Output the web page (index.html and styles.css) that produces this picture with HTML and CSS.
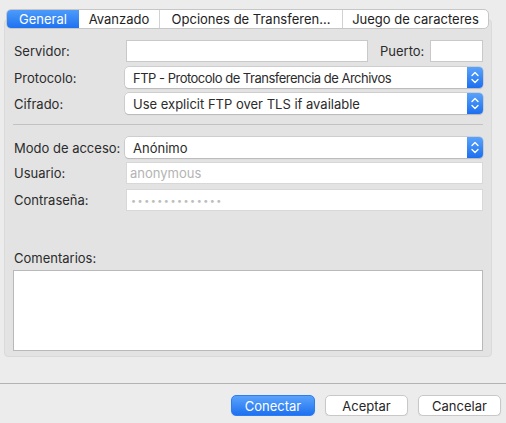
FILE: index.html
```html
<!DOCTYPE html>
<html lang="es">
<head>
  <meta charset="UTF-8" />
  <title>Gestor de sitios</title>
  <link rel="stylesheet" href="styles.css">
</head>
<body>

  <div class="tabs">
    <div class="tab active">General</div>
    <div class="tab tab-avanzado">Avanzado</div>
    <div class="tab tab-opciones">Opciones de Transferen...</div>
    <div class="tab tab-juego">Juego de caracteres</div>
  </div>

  <div class="panel">
    <div class="row">
      <label class="label">Servidor:</label>
      <input class="field host" type="text" />
      <label class="label-port">Puerto:</label>
      <input class="field port" type="text" />
    </div>

    <div class="row gap-5">
      <label class="label">Protocolo:</label>
      <div class="select">
        <span class="narrow">FTP - Protocolo de Transferencia de Archivos</span>
        <span class="arrows"><svg width="16" height="21" viewBox="0 0 16 21"><path d="M5 8.5 L8 5.5 L11 8.5 M5 12.5 L8 15.5 L11 12.5" fill="none" stroke="#fff" stroke-width="1.4" stroke-linecap="round" stroke-linejoin="round"/></svg></span>
      </div>
    </div>

    <div class="row gap-5">
      <label class="label">Cifrado:</label>
      <div class="select">
        <span>Use explicit FTP over TLS if available</span>
        <span class="arrows"><svg width="16" height="21" viewBox="0 0 16 21"><path d="M5 8.5 L8 5.5 L11 8.5 M5 12.5 L8 15.5 L11 12.5" fill="none" stroke="#fff" stroke-width="1.4" stroke-linecap="round" stroke-linejoin="round"/></svg></span>
      </div>
    </div>

    <div class="separator"></div>

    <div class="row gap-12">
      <label class="label">Modo de acceso:</label>
      <div class="select">
        <span>Anónimo</span>
        <span class="arrows"><svg width="16" height="21" viewBox="0 0 16 21"><path d="M5 8.5 L8 5.5 L11 8.5 M5 12.5 L8 15.5 L11 12.5" fill="none" stroke="#fff" stroke-width="1.4" stroke-linecap="round" stroke-linejoin="round"/></svg></span>
      </div>
    </div>

    <div class="row gap-4">
      <label class="label">Usuario:</label>
      <input class="field wide" type="text" placeholder="anonymous" disabled />
    </div>

    <div class="row gap-5">
      <label class="label">Contraseña:</label>
      <div class="field wide dots">••••••••••••••</div>
    </div>

    <label class="label comments-label">Comentarios:</label>
    <textarea class="comments"></textarea>
  </div>

  <div class="footer">
    <button class="btn primary">Conectar</button>
    <button class="btn">Aceptar</button>
    <button class="btn">Cancelar</button>
  </div>

</body>
</html>
```

FILE: styles.css
```css
* {
  box-sizing: border-box;
}

body {
  margin: 0;
  background: #ececec;
  font-family: Inter, 'Liberation Sans', sans-serif;
  font-size: 13px;
  color: #2b2b2b;
}

/* Pestañas */
.tabs {
  position: relative;
  z-index: 1;
  display: flex;
  width: 483px;
  height: 20px;
  margin: 9px 0 0 6px;
  background: white;
  border: 1px solid #c6c6c6;
  border-radius: 5px;
  overflow: hidden;
}

.tab {
  display: flex;
  align-items: center;
  justify-content: center;
  height: 100%;
  border-left: 1px solid #d2d2d2;
  color: #222;
  white-space: nowrap;
}

.tab.active {
  width: 72px;
  border-left: none;
  background: linear-gradient(#4d9bfa, #1f72f0);
  color: white;
}

.tab-avanzado { width: 80px; border-left: none; }
.tab-opciones { width: 183px; }
.tab-juego { flex: 1; }

/* Panel */
.panel {
  width: 488px;
  margin: -10px 0 0 4px;
  padding: 20px 8px 5px 8px;
  background: #e3e3e3;
  border: 1px solid #dadada;
  border-radius: 4px;
}

.row {
  display: flex;
  align-items: center;
}

.gap-4 { margin-top: 4px; }
.gap-5 { margin-top: 5px; }
.gap-12 { margin-top: 12px; }

.label {
  width: 112px;
  flex-shrink: 0;
  padding-left: 1px;
}

.field {
  height: 22px;
  border: 1px solid #c9c9c9;
  background: white;
  font-family: inherit;
  font-size: 13px;
  padding: 0 3px;
  margin: 0;
  outline: none;
}

.host {
  width: 242px;
  margin-left: 1px;
}

.label-port {
  margin-left: 12px;
}

.port {
  width: 53px;
  margin-left: auto;
}

.wide {
  flex: 1;
  margin-left: 1px;
}

.field::placeholder {
  color: #b4b4b4;
}

.field:disabled {
  background: white;
  border-color: #d8d8d8;
}

.dots {
  display: flex;
  align-items: center;
  color: #bdbdbd;
  font-size: 9px;
  letter-spacing: 1.5px;
  padding-left: 4px;
  border-color: #d8d8d8;
}

.select {
  flex: 1;
  display: flex;
  align-items: center;
  justify-content: space-between;
  height: 21px;
  padding-left: 8px;
  background: white;
  border-radius: 4px;
  box-shadow: 0 0 0 0.5px #b9b9b9, 0 1px 1px rgba(0, 0, 0, 0.18);
  overflow: hidden;
}

.narrow {
  letter-spacing: -0.5px;
}

.arrows {
  display: flex;
  width: 16px;
  height: 21px;
  background: linear-gradient(#5aa3fb, #1c6ff0);
}

.separator {
  height: 1px;
  margin-top: 10px;
  background: #c2c2c2;
}

.comments-label {
  display: block;
  margin-top: 39px;
  line-height: 16px;
}

.comments {
  display: block;
  width: 100%;
  height: 81px;
  margin-top: 4px;
  border: 1px solid #b9b9b9;
  background: white;
  resize: none;
}

/* Botones */
.footer {
  margin-top: 26px;
  border-top: 1px solid #b3b3b3;
  display: flex;
  justify-content: flex-end;
  gap: 10px;
  padding: 11px 5px 0 0;
}

.btn {
  width: 83px;
  height: 21px;
  border: 1px solid #c8c8c8;
  border-radius: 5px;
  background: white;
  font-family: inherit;
  font-size: 13px;
  color: #262626;
  box-shadow: 0 1px 1px rgba(0, 0, 0, 0.08);
  padding: 0;
}

.btn.primary {
  width: 84px;
  border-color: #2a7df3;
  background: linear-gradient(#5aa3fb, #1e71f0);
  color: white;
}
```
